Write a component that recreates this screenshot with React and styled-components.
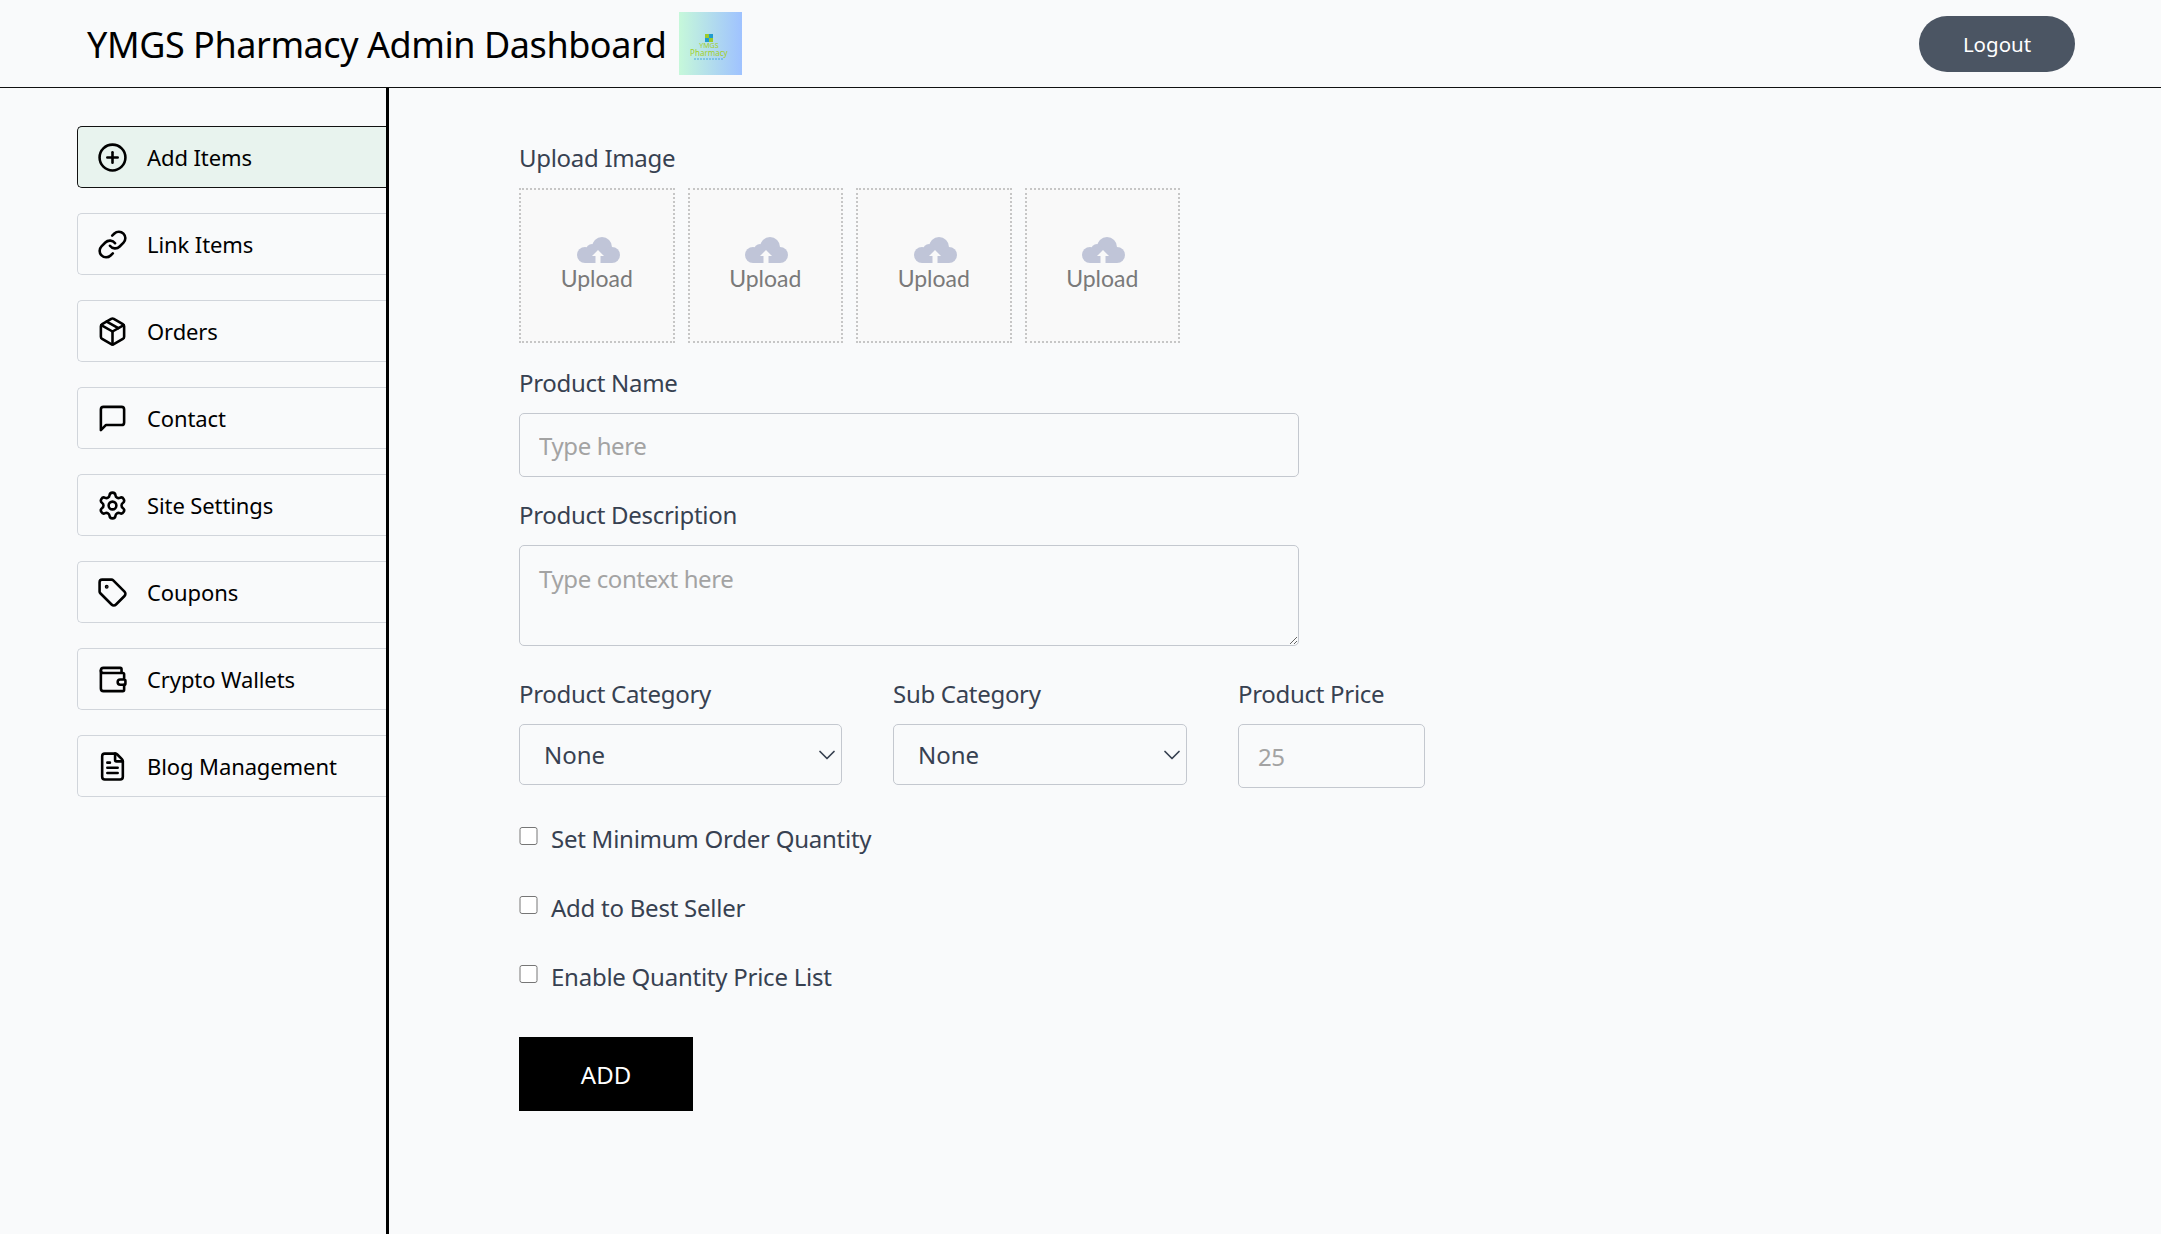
import React from "react";
import styled, { createGlobalStyle } from "styled-components";
import {
  ChevronDown,
  CirclePlus,
  Link as LinkIcon,
  Package,
  Settings,
  Tag,
  Wallet,
  FileText,
} from "lucide-react";

const GlobalStyle = createGlobalStyle`
  * { box-sizing: border-box; }
  html, body { margin: 0; padding: 0; background: #f9fafb; }
  body { font-family: "Noto Sans", "Open Sans", sans-serif; }
`;

const Page = styled.div`
  height: 1234px;
  display: flex;
  flex-direction: column;
  overflow: hidden;
`;

const Header = styled.header`
  height: 88px;
  flex: none;
  display: flex;
  align-items: center;
  justify-content: space-between;
  padding: 0 86px 0 87px;
  border-bottom: 1.5px solid #111;
`;

const Brand = styled.div`
  display: flex;
  align-items: center;
  gap: 13px;
`;

const Title = styled.h1`
  margin: 2px 0 0;
  font-size: 36px;
  font-weight: 400;
  color: #000;
  letter-spacing: -0.45px;
  white-space: nowrap;
`;

const Logo = styled.div`
  width: 63px;
  height: 63px;
  display: flex;
  flex-direction: column;
  align-items: center;
  justify-content: center;
  padding: 6px 4px 0 0;
  background: linear-gradient(90deg, #c6f8da 0%, #9fc2ff 100%);
  color: #a3cf2a;
  line-height: 1;
`;

const LogoLine = styled.span`
  font-size: ${(props) => props.$size}px;
  white-space: nowrap;
`;

const LogoutButton = styled.button`
  width: 156px;
  height: 56px;
  border: none;
  border-radius: 28px;
  background: #4b5563;
  color: #fff;
  font-family: inherit;
  font-size: 20.5px;
`;

const Body = styled.div`
  flex: 1;
  display: flex;
  min-height: 0;
`;

const Sidebar = styled.nav`
  width: 389px;
  flex: none;
  display: flex;
  flex-direction: column;
  gap: 25px;
  padding: 38px 0 0 77px;
  border-right: 3px solid #000;
`;

const NavItem = styled.a`
  height: 62px;
  display: flex;
  align-items: center;
  gap: 19px;
  padding-left: 19px;
  border: 1.5px solid ${(props) => (props.$active ? "#111" : "#d1d5db")};
  border-right: none;
  border-radius: 5px 0 0 5px;
  background: ${(props) => (props.$active ? "#e8f3ee" : "transparent")};
  color: #000;
  font-size: 22px;
  letter-spacing: -0.1px;
`;

const Main = styled.main`
  flex: 1;
  padding: 53px 0 0 130px;
  display: flex;
  flex-direction: column;
  align-items: flex-start;
`;

const Label = styled.label`
  display: block;
  color: #374151;
  font-size: 24px;
  line-height: 34px;
  letter-spacing: -0.3px;
  white-space: nowrap;
`;

const Field = styled.div`
  display: flex;
  flex-direction: column;
  gap: ${(props) => props.$gap || 10}px;
  margin-bottom: ${(props) => props.$bottom || 0}px;
`;

const UploadRow = styled.div`
  display: flex;
  gap: 13px;
`;

const UploadBox = styled.div`
  width: 155.5px;
  height: 155px;
  display: flex;
  flex-direction: column;
  align-items: center;
  justify-content: center;
  padding-bottom: 2px;
  background: #f9f9f9;
  border: 2px dotted #c6c6c6;
  color: #7a7a7a;
  font-family: "Lato", sans-serif;
  font-size: 23px;
  line-height: 30px;

  svg {
    margin-left: 3px;
  }
`;

const TextInput = styled.input`
  width: ${(props) => props.$width}px;
  height: ${(props) => props.$height}px;
  padding: 0 19px;
  border: 1.5px solid #c4c8cf;
  border-radius: 5px;
  background: transparent;
  font-family: inherit;
  font-size: 24px;
  letter-spacing: -0.4px;
  &::placeholder { color: #a3a3a3; opacity: 1; }
`;

const TextArea = styled.textarea`
  display: block;
  width: 780px;
  height: 101px;
  padding: 16px 19px;
  border: 1.5px solid #c4c8cf;
  border-radius: 5px;
  background: transparent;
  font-family: inherit;
  font-size: 24px;
  letter-spacing: -0.4px;
  &::placeholder { color: #a3a3a3; opacity: 1; }
`;

const Row = styled.div`
  display: flex;
  gap: 51px;
  margin-bottom: 33px;
`;

const SelectWrap = styled.div`
  position: relative;
  width: ${(props) => props.$width}px;
  height: 61px;
  color: #374151;

  svg {
    position: absolute;
    right: 1px;
    top: 17px;
    pointer-events: none;
  }
`;

const Select = styled.select`
  width: 100%;
  height: 100%;
  padding: 0 24px;
  appearance: none;
  border: 1.5px solid #c4c8cf;
  border-radius: 5px;
  background: transparent;
  color: #374151;
  font-family: inherit;
  font-size: 24px;
`;

const CheckRow = styled.label`
  display: flex;
  align-items: center;
  gap: 13px;
  height: 34px;
  margin-bottom: 35px;
  color: #374151;
  font-size: 24px;
  letter-spacing: -0.25px;
  white-space: nowrap;
`;

const CheckBox = styled.input`
  width: 19px;
  height: 18px;
  margin: 0 0 4px;
`;

const AddButton = styled.button`
  width: 174px;
  height: 74px;
  margin-top: 9px;
  border: none;
  background: #000;
  color: #fff;
  font-family: inherit;
  font-size: 24px;
`;

const CloudIcon = () => (
  <svg width="43" height="26" viewBox="0 0 43 26" aria-hidden="true">
    <g fill="#c0c5d8">
      <circle cx="25" cy="10" r="10" />
      <circle cx="15" cy="13" r="6" />
      <circle cx="8" cy="18" r="8" />
      <circle cx="35" cy="18" r="8" />
      <rect x="8" y="14" width="27" height="12" />
    </g>
    <path fill="#f9f9f9" d="M21 13 L27 19 H23.500 V26 H18.500 V19 H15 Z" />
  </svg>
);

// the bubble with the straight tail at its lower left
const BubbleIcon = ({ size, strokeWidth }) => (
  <svg
    width={size}
    height={size}
    viewBox="0 0 24 24"
    fill="none"
    stroke="currentColor"
    strokeWidth={strokeWidth}
    strokeLinecap="round"
    strokeLinejoin="round"
    aria-hidden="true"
  >
    <path d="M21 15a2 2 0 0 1-2 2H7l-4 4V5a2 2 0 0 1 2-2h14a2 2 0 0 1 2 2z" />
  </svg>
);

const navItems = [
  { label: "Add Items", Icon: CirclePlus, active: true },
  { label: "Link Items", Icon: LinkIcon },
  { label: "Orders", Icon: Package },
  { label: "Contact", Icon: BubbleIcon },
  { label: "Site Settings", Icon: Settings },
  { label: "Coupons", Icon: Tag },
  { label: "Crypto Wallets", Icon: Wallet },
  { label: "Blog Management", Icon: FileText },
];

const checks = [
  "Set Minimum Order Quantity",
  "Add to Best Seller",
  "Enable Quantity Price List",
];

export default function App() {
  return (
    <Page>
      <GlobalStyle />
      <Header>
        <Brand>
          <Title>YMGS Pharmacy Admin Dashboard</Title>
          <Logo>
            <svg width="8" height="8" viewBox="0 0 8 8" aria-hidden="true">
              <rect width="4" height="4" fill="#9ccb2c" />
              <rect x="4" y="4" width="4" height="4" fill="#9ccb2c" />
              <rect x="4" width="4" height="4" fill="#1f9bd0" />
              <rect y="4" width="4" height="4" fill="#1f9bd0" />
            </svg>
            <LogoLine $size={7}>YMGS</LogoLine>
            <LogoLine $size={8}>Pharmacy</LogoLine>
            <svg width="30" height="3" viewBox="0 0 30 3" aria-hidden="true">
              <line x1="0" y1="2" x2="30" y2="2" stroke="#4aa8d8" strokeWidth="1" strokeDasharray="2 1" />
            </svg>
          </Logo>
        </Brand>
        <LogoutButton>Logout</LogoutButton>
      </Header>
      <Body>
        <Sidebar>
          {navItems.map(({ label, Icon, active }) => (
            <NavItem key={label} $active={active}>
              <Icon size={31} strokeWidth={2} />
              {label}
            </NavItem>
          ))}
        </Sidebar>
        <Main>
          <Field $gap={13} $bottom={23}>
            <Label>Upload Image</Label>
            <UploadRow>
              {[0, 1, 2, 3].map((n) => (
                <UploadBox key={n}>
                  <CloudIcon />
                  Upload
                </UploadBox>
              ))}
            </UploadRow>
          </Field>
          <Field $gap={13} $bottom={21}>
            <Label>Product Name</Label>
            <TextInput placeholder="Type here" $width={780} $height={64} />
          </Field>
          <Field $gap={13} $bottom={31}>
            <Label>Product Description</Label>
            <TextArea placeholder="Type context here" />
          </Field>
          <Row>
            <Field $gap={13}>
              <Label>Product Category</Label>
              <SelectWrap $width={323}>
                <Select>
                  <option>None</option>
                </Select>
                <ChevronDown size={28} strokeWidth={1.5} />
              </SelectWrap>
            </Field>
            <Field $gap={13}>
              <Label>Sub Category</Label>
              <SelectWrap $width={294}>
                <Select>
                  <option>None</option>
                </Select>
                <ChevronDown size={28} strokeWidth={1.5} />
              </SelectWrap>
            </Field>
            <Field $gap={13}>
              <Label>Product Price</Label>
              <TextInput placeholder="25" $width={187} $height={64} />
            </Field>
          </Row>
          {checks.map((text) => (
            <CheckRow key={text}>
              <CheckBox type="checkbox" />
              {text}
            </CheckRow>
          ))}
          <AddButton>ADD</AddButton>
        </Main>
      </Body>
    </Page>
  );
}
